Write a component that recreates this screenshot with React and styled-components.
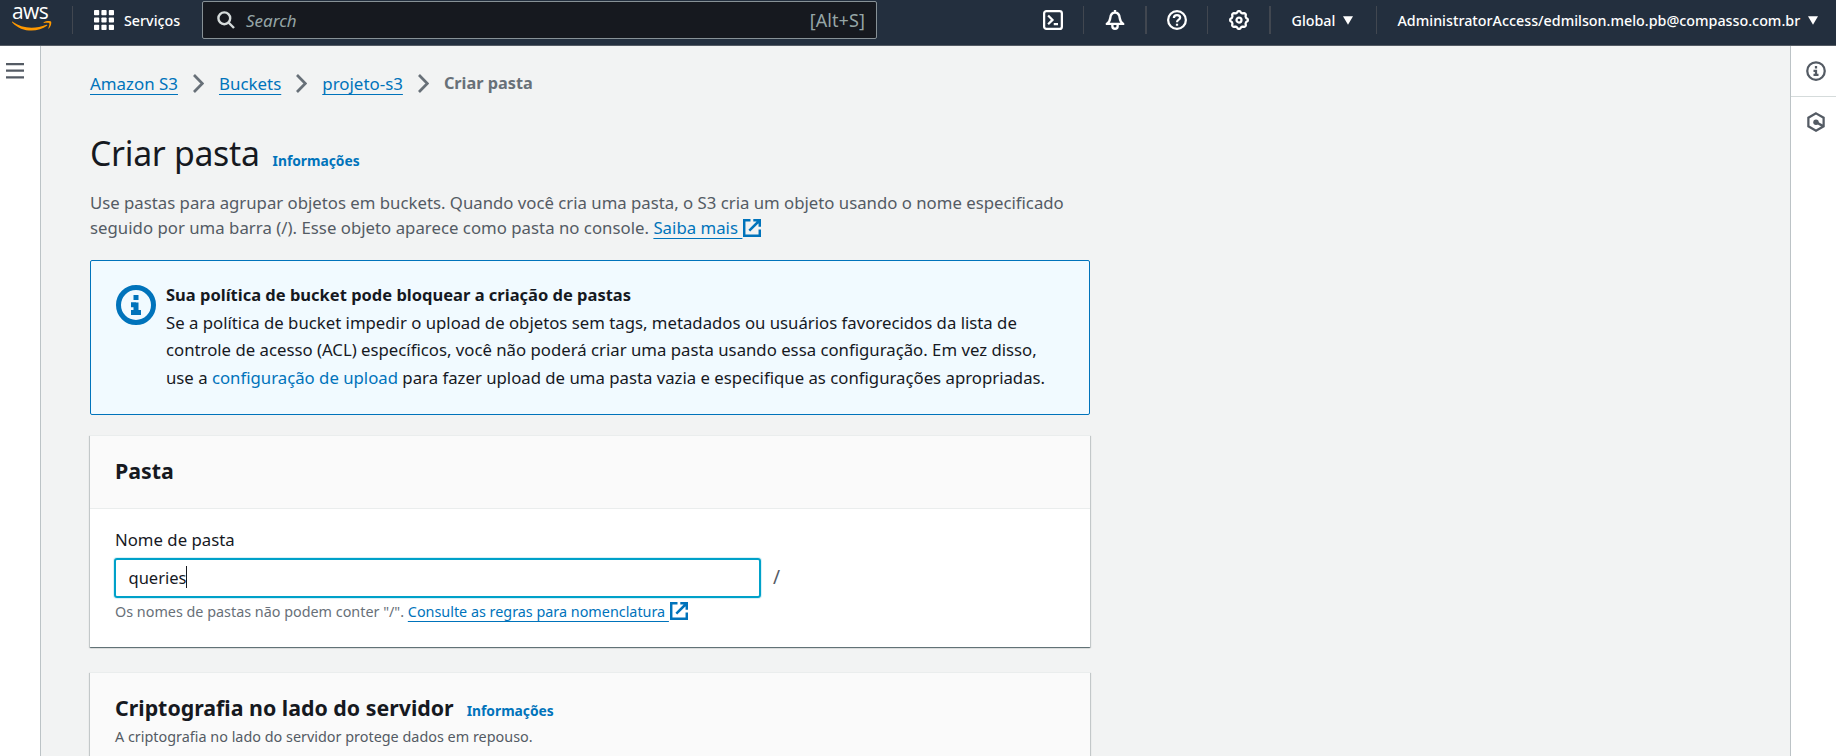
import React from "react";
import styled, { createGlobalStyle } from "styled-components";

const link = "#0073bb";

const Global = createGlobalStyle`
  * { box-sizing: border-box; }
  html, body { margin: 0; height: 100%; overflow: hidden; }
  body {
    font-family: "Noto Sans", "Open Sans", sans-serif;
    font-size: 16.75px;
    line-height: 25px;
    color: #16191f;
    background: #f2f3f3;
  }
  h1, h2, p { margin: 0; }
  svg { display: block; flex: none; }
`;

const Page = styled.div`
  display: flex;
  flex-direction: column;
  height: 756px;
  white-space: nowrap;
`;

/* ---------- top bar ---------- */
const TopBar = styled.header`
  display: flex;
  align-items: center;
  height: 46px;
  flex: none;
  padding-bottom: 5px;
  background: #232f3e;
  border-bottom: 1px solid #545b64;
  color: #fff;
  font-size: 14.3px;
  font-weight: 500;
`;

const Logo = styled.div`
  width: 72px;
  height: 40px;
  padding: 1px 0 0 12px;
`;

const LogoText = styled.div`
  width: 38px;
  font-family: "Open Sans", sans-serif;
  font-weight: 500;
  font-size: 21px;
  line-height: 20px;
  letter-spacing: -0.6px;
`;

const Divider = styled.span`
  width: ${(p) => (p.$thick ? 2 : 1)}px;
  height: 28px;
  background: #414750;
`;

const Services = styled.div`
  display: flex;
  align-items: center;
  gap: 10px;
  padding-left: 21px;
  width: 129px;
`;

const Search = styled.div`
  display: flex;
  align-items: center;
  width: 675px;
  height: 38px;
  padding: 0 11px 0 14px;
  border: 1px solid #879196;
  border-radius: 2px;
  background: #16191f;
  color: #95a5a6;
  font-size: 17px;
  font-weight: 400;
`;

const Placeholder = styled.span`
  flex: 1;
  margin-left: 11px;
  font-style: italic;
`;

const Shortcut = styled.span`
  font-size: 18px;
  letter-spacing: 0.1px;
`;

const Tools = styled.div`
  display: flex;
  align-items: center;
  margin-left: auto;
`;

const Tool = styled.span`
  display: flex;
  justify-content: center;
  width: ${(p) => p.$width || 61}px;
`;

const Menu = styled.span`
  display: flex;
  align-items: center;
  gap: 8px;
  width: ${(p) => p.$width}px;
  padding-left: 20.500px;
`;

/* ---------- page body ---------- */
const Body = styled.div`
  display: flex;
  flex: 1;
  min-height: 0;
`;

const NavRail = styled.nav`
  width: 41px;
  flex: none;
  padding: 17px 0 0 6px;
  background: #fff;
  border-right: 1px solid #bcc3c6;
`;

const ToolRail = styled.aside`
  width: 46px;
  flex: none;
  background: #fff;
  border-left: 1px solid #bcc3c6;
`;

const RailItem = styled.div`
  display: flex;
  justify-content: center;
  padding: 15px 0 0 5px;
  height: 51px;
  color: #545b64;
  border-bottom: ${(p) => (p.$last ? "none" : "1px solid #d5dbdb")};
`;

const Main = styled.main`
  flex: 1;
  min-width: 0;
  padding: 25px 0 0 49px;
`;

const Content = styled.div`
  width: 1000px;
`;

const Crumbs = styled.nav`
  display: flex;
  align-items: center;
  gap: 15px;
  font-size: 16.9px;
`;

const Link = styled.a`
  color: ${link};
  text-decoration: underline;
  text-decoration-thickness: 1px;
  text-underline-offset: 4px;
  text-decoration-skip-ink: none;
`;

const PlainLink = styled.a`
  color: ${link};
`;

const Current = styled.span`
  color: #687078;
  font-weight: 700;
  font-size: 16.3px;
`;

const TitleRow = styled.div`
  display: flex;
  align-items: baseline;
  gap: 13px;
  margin-top: 35px;
`;

const Title = styled.h1`
  font-size: 33.8px;
  font-weight: 400;
  line-height: 45px;
  letter-spacing: -0.3px;
`;

const InfoLink = styled.a`
  color: ${link};
  font-size: 13.8px;
  font-weight: 700;
  line-height: 20px;
`;

const Intro = styled.p`
  margin: 14px 0 20px;
  color: #545b64;
`;

const External = styled.svg`
  display: inline-block;
  vertical-align: -3px;
  margin-left: 1px;
`;

const IntroEnd = styled.span`
  letter-spacing: 0.025px;
`;

const Alert = styled.section`
  display: flex;
  gap: 10px;
  height: 155px;
  padding: 20.2px 25px 0;
  border: 1px solid ${link};
  border-radius: 2px;
  background: #f1faff;
  line-height: 27.5px;
`;

const AlertIcon = styled.svg`
  margin-top: 3.8px;
`;

const AlertTitle = styled.div`
  font-weight: 700;
  font-size: 16.5px;
`;

const Card = styled.section`
  margin-top: ${(p) => p.$gap}px;
  background: #fff;
  border-top: 1px solid #eaeded;
  box-shadow: 0 1px 1px 0 rgba(0, 28, 36, 0.3), 1px 1px 1px 0 rgba(0, 28, 36, 0.15),
    -1px 1px 1px 0 rgba(0, 28, 36, 0.15), 0 1px 0 0 rgba(0, 28, 36, 0.2);
`;

const CardHeader = styled.div`
  padding: 21px 25px 23px;
  background: #fafafa;
  border-bottom: 1px solid #eaeded;
`;

const CardTitleRow = styled.div`
  display: flex;
  align-items: baseline;
  gap: 13px;
`;

const CardTitle = styled.h2`
  font-size: 21.35px;
  font-weight: 700;
  line-height: 28px;
`;

const CardText = styled.p`
  margin-top: 5px;
  color: #545b64;
  font-size: 14.4px;
  line-height: 20px;
`;

const Field = styled.div`
  padding: 18px 25px 0;
  height: 138px;
`;

const InputRow = styled.div`
  display: flex;
  align-items: center;
  gap: 12px;
  margin: 6px 0 0 -1px;
  color: #545b64;
`;

const Input = styled.div`
  display: flex;
  align-items: center;
  width: 647px;
  height: 40px;
  padding: 0 0 2px 12.5px;
  border: 2px solid #00a1c9;
  border-radius: 3px;
  box-shadow: 0 0 0 1px rgba(0, 161, 201, 0.15);
  color: #16191f;
  font-size: 16.5px;
`;

const Slash = styled.span`
  font-size: 19px;
  padding-bottom: 2px;
`;

const Caret = styled.span`
  width: 1px;
  height: 22px;
  background: #16191f;
`;

const Hint = styled.p`
  margin-top: 3.5px;
  color: #687078;
  font-size: 14.37px;
  line-height: 20px;
`;

/* ---------- icons ---------- */
const Svg = ({ size = 20, sw = 2, children }) => (
  <svg width={size} height={size} viewBox="0 0 16 16" fill="none" stroke="currentColor" strokeWidth={sw}>
    {children}
  </svg>
);

const Smile = () => (
  <svg width="40" height="11" viewBox="0 0 40 11" fill="#ff9900">
    <path d="M.6.7C6 4.600 12.500 6.700 19.500 6.700c5 0 10.200-1.100 14.800-3 .8-.3 1.400.5.7 1.100C31 7.900 25 9.600 19.600 9.600 12.300 9.600 5.400 6.900.2 1.400-.2 1 .1.400.6.7z" />
    <path d="M31.600 1.400C33.800-.2 38.200-.2 39 .6c.8.9-.1 5-2.200 6.900-.4.300-.7.100-.5-.3.600-1.500 1.500-4.200 1-4.900-.500-.700-3.500-.5-5.300-.3-.5 0-.8-.3-.4-.6z" />
  </svg>
);

const AppsGrid = () => (
  <svg width="20" height="20" viewBox="0 0 20 20" fill="#fff">
    {[0, 7.4, 14.8].map((y) =>
      [0, 7.4, 14.8].map((x) => <rect key={`${x}-${y}`} x={x} y={y} width="5.200" height="5.200" rx="0.800" />)
    )}
  </svg>
);

const Magnifier = () => (
  <svg width="18" height="18" viewBox="0 0 18 18" fill="none" stroke="#d5dbdb" strokeWidth="2.400">
    <circle cx="7.300" cy="7.300" r="5.900" />
    <path d="M11.500 11.500l5.500 5.500" />
  </svg>
);

const Terminal = () => (
  <Svg sw={1.8}>
    <rect x="0.900" y="0.900" width="14.200" height="14.200" rx="1.800" />
    <path d="M4.100 4.400l3.500 3.500-3.500 3.500M8.600 11.200h3.400" />
  </Svg>
);

const Bell = () => (
  <Svg sw={1.9}>
    <path d="M8 0v2M1.400 11.100h13.200c-2-1.300-2.600-2.700-2.800-4.600C11.500 3.500 10.200 2 8 2S4.500 3.500 4.200 6.500c-.2 1.900-.8 3.300-2.800 4.600z" strokeLinejoin="round" />
    <path d="M5.900 11.500v1.400a2.100 2.100 0 0 0 4.200 0v-1.400" />
  </Svg>
);

const Help = () => (
  <Svg sw={1.8}>
    <circle cx="8" cy="8" r="7.100" />
    <path d="M5.500 6.300C5.500 4.800 6.500 4 8 4s2.500.9 2.500 2.100C10.500 7.700 8 7.700 8 9.700M8 10.900v1.700" />
  </Svg>
);

const gearPath = Array.from({ length: 80 }, (_, i) => {
  const a = (i / 80) * Math.PI * 2;
  const r = 6.5 + 0.6 * Math.tanh(2 * Math.cos(8 * a));
  return `${i ? "L" : "M"}${(8 + r * Math.sin(a)).toFixed(2)} ${(8 - r * Math.cos(a)).toFixed(2)}`;
}).join("") + "Z";

const Gear = () => (
  <Svg sw={1.8}>
    <path d={gearPath} strokeLinejoin="round" />
    <circle cx="8" cy="8" r="2" />
  </Svg>
);

const Down = () => (
  <svg width="10" height="9" viewBox="0 0 10 9" fill="#fff">
    <path d="M0 .3h10L5 8.700z" />
  </svg>
);

const Hamburger = () => (
  <svg width="18" height="16" viewBox="0 0 18 16" fill="#545b64">
    <path d="M0 0h18v2.200H0zM0 6.600h18v2.200H0zM0 13.200h18v2.200H0z" />
  </svg>
);

const Chevron = () => (
  <svg width="11" height="19" viewBox="0 0 11 19" fill="none" stroke="#687078" strokeWidth="2.700">
    <path d="M1 1l8.300 8.500L1 18" />
  </svg>
);

const infoParts = (
  <>
    <circle cx="8" cy="8" r="7" />
    <path d="M8 4v2M6 7.900h2M8 7v4M6 11h4" />
  </>
);

const Hexagon = () => (
  <Svg sw={1.8}>
    <path d="M8 1.100l6.100 3.500v6.800L8 14.900l-6.100-3.500V4.600z" />
    <circle cx="8" cy="8.100" r="2.200" fill="currentColor" stroke="none" />
    <path d="M8.500 8.400l5.200 2.900" strokeWidth="2" />
  </Svg>
);

const ExternalIcon = () => (
  <External width="18" height="18" viewBox="0 0 18 18" fill="none" stroke={link} strokeWidth="2.500">
    <path d="M7.500 1.200H1.200v15.600h15.600V10.500M10.300 1.200h6.500v6.500M16.500 1.500L6.300 11.700" />
  </External>
);

export default function App() {
  return (
    <Page>
      <Global />
      <TopBar>
        <Logo>
          <LogoText>aws</LogoText>
          <Smile />
        </Logo>
        <Divider />
        <Services>
          <AppsGrid />
          <span>Serviços</span>
        </Services>
        <Search>
          <Magnifier />
          <Placeholder>Search</Placeholder>
          <Shortcut>[Alt+S]</Shortcut>
        </Search>
        <Tools>
          <Tool $width={60}><Terminal /></Tool>
          <Divider />
          <Tool><Bell /></Tool>
          <Divider $thick />
          <Tool $width={60}><Help /></Tool>
          <Divider />
          <Tool><Gear /></Tool>
          <Divider $thick />
          <Menu $width={105}>Global <Down /></Menu>
          <Divider />
          <Menu $width={459}>AdministratorAccess/edmilson.melo.pb@compasso.com.br <Down /></Menu>
        </Tools>
      </TopBar>
      <Body>
        <NavRail><Hamburger /></NavRail>
        <Main>
          <Content>
            <Crumbs>
              <Link>Amazon S3</Link>
              <Chevron />
              <Link>Buckets</Link>
              <Chevron />
              <Link>projeto-s3</Link>
              <Chevron />
              <Current>Criar pasta</Current>
            </Crumbs>
            <TitleRow>
              <Title>Criar pasta</Title>
              <InfoLink>Informações</InfoLink>
            </TitleRow>
            <Intro>
              Use pastas para agrupar objetos em buckets. Quando você cria uma pasta, o S3 cria um objeto usando o nome especificado
              <br />
              <IntroEnd>
                seguido por uma barra (/). Esse objeto aparece como pasta no console. <Link>Saiba mais&nbsp;</Link>
              </IntroEnd>
              <ExternalIcon />
            </Intro>
            <Alert>
              <AlertIcon width="40" height="40" viewBox="0 0 16 16" fill="none" stroke={link} strokeWidth="2">
                {infoParts}
              </AlertIcon>
              <div>
                <AlertTitle>Sua política de bucket pode bloquear a criação de pastas</AlertTitle>
                Se a política de bucket impedir o upload de objetos sem tags, metadados ou usuários favorecidos da lista de
                <br />
                controle de acesso (ACL) específicos, você não poderá criar uma pasta usando essa configuração. Em vez disso,
                <br />
                use a <PlainLink>configuração de upload</PlainLink> para fazer upload de uma pasta vazia e especifique as
                configurações apropriadas.
              </div>
            </Alert>
            <Card $gap={20}>
              <CardHeader>
                <CardTitle>Pasta</CardTitle>
              </CardHeader>
              <Field>
                <div>Nome de pasta</div>
                <InputRow>
                  <Input>queries<Caret /></Input>
                  <Slash>/</Slash>
                </InputRow>
                <Hint>
                  Os nomes de pastas não podem conter "/". <Link>Consulte as regras para nomenclatura&nbsp;</Link>
                  <ExternalIcon />
                </Hint>
              </Field>
            </Card>
            <Card $gap={25}>
              <CardHeader>
                <CardTitleRow>
                  <CardTitle>Criptografia no lado do servidor</CardTitle>
                  <InfoLink>Informações</InfoLink>
                </CardTitleRow>
                <CardText>A criptografia no lado do servidor protege dados em repouso.</CardText>
              </CardHeader>
            </Card>
          </Content>
        </Main>
        <ToolRail>
          <RailItem>
            <Svg sw={1.8}>{infoParts}</Svg>
          </RailItem>
          <RailItem $last>
            <Hexagon />
          </RailItem>
        </ToolRail>
      </Body>
    </Page>
  );
}
